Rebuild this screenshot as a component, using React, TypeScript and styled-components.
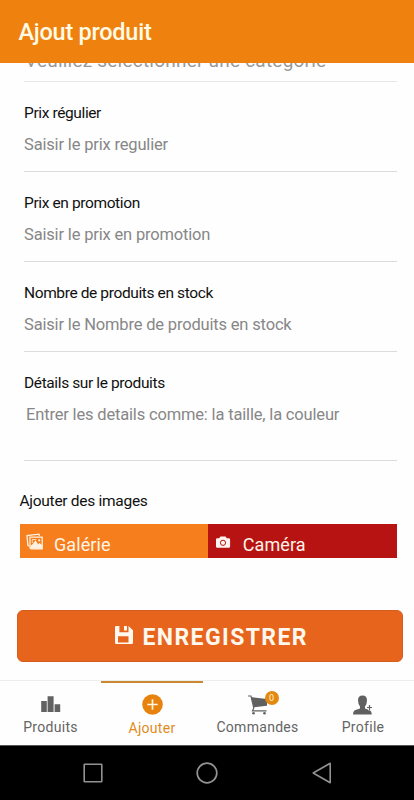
import React from 'react';
import styled, { createGlobalStyle } from 'styled-components';

const GlobalStyle = createGlobalStyle`
  *, *::before, *::after { box-sizing: border-box; }
  body { margin: 0; background: #fff; font-family: Roboto, "Liberation Sans", sans-serif; }
`;

const Screen = styled.div`
  display: flex;
  flex-direction: column;
  width: 414px;
  height: 800px;
  overflow: hidden;
  background: #fefefe;
`;

const Header = styled.header`
  flex: none;
  display: flex;
  align-items: center;
  height: 63px;
  padding-left: 18.5px;
  background: #ef820f;
`;

const Title = styled.h1`
  margin: 0;
  font-size: 23.5px;
  line-height: 26px;
  font-weight: 500;
  letter-spacing: -0.25px;
  color: #fffbe6;
`;

const Content = styled.main`
  flex: 1;
  min-height: 0;
  display: flex;
  flex-direction: column;
  justify-content: flex-end;
  overflow: hidden;
`;

const Form = styled.div`
  flex: none;
  padding: 0 17px 0 24px;
`;

const CategoryField = styled.div`
  height: 40px;
  border-bottom: 1px solid #e6e6e6;
  font-size: 19px;
  line-height: 37px;
  letter-spacing: 0.22px;
  white-space: nowrap;
  color: #999;
  padding-left: 1px;
`;

const Field = styled.label<{ $tall?: boolean }>`
  display: block;
  height: ${p => (p.$tall ? 109 : 90)}px;
  padding-top: 21px;
  border-bottom: 1px solid #dadcdc;
`;

const FieldLabel = styled.span<{ $spacing?: number }>`
  display: block;
  font-size: 15.5px;
  line-height: 20px;
  letter-spacing: ${p => p.$spacing ?? -0.38}px;
  color: #101010;
`;

const Placeholder = styled.span<{ $indent?: boolean }>`
  display: block;
  margin-top: 11px;
  padding-left: ${p => (p.$indent ? 2 : 0)}px;
  font-size: 16.5px;
  line-height: 22px;
  letter-spacing: -0.17px;
  white-space: nowrap;
  color: #878787;
`;

const Images = styled.section`
  flex: none;
  padding: 30px 17px 0 19.5px;
`;

const SourceRow = styled.div`
  display: grid;
  grid-template-columns: 1fr 1fr;
  height: 34px;
  margin-top: 13px;
`;

const SourceButton = styled.button<{ $color: string }>`
  display: flex;
  align-items: center;
  border: 0;
  padding: 7px 0 0 6px;
  gap: 10.5px;
  background: ${p => p.$color};
  color: #fff5e8;
  font: 400 18px/24px Roboto, sans-serif;
  letter-spacing: 0.1px;

  svg { flex: none; margin-top: -5px; }
`;

const SaveButton = styled.button`
  flex: none;
  display: flex;
  align-items: center;
  justify-content: center;
  gap: 10px;
  height: 52px;
  margin: 52px 11.5px 18px 17px;
  padding: 0 0 0 3px;
  border: 1px solid #d65d20;
  border-radius: 6px;
  background: #e6641c;
  color: #fff8ee;
  font: 700 23px/28px Roboto, sans-serif;
  letter-spacing: 1.4px;

  svg { margin-top: -3px; }
  span { padding-top: 4px; }
`;

const TabBar = styled.nav`
  flex: none;
  display: grid;
  grid-template-columns: 101px 102px 109px 102px;
  height: 65px;
  border-top: 1px solid #eee;
`;

const Tab = styled.div<{ $active?: boolean }>`
  display: flex;
  flex-direction: column;
  align-items: center;
  padding-top: ${p => (p.$active ? 11 : 12)}px;
  border-top: 2px solid ${p => (p.$active ? '#cb8732' : 'transparent')};
  color: ${p => (p.$active ? '#e08a1c' : '#646464')};
  font-size: 14px;
  line-height: 18px;
  letter-spacing: 0.3px;
`;

const TabIcon = styled.div<{ $active?: boolean }>`
  position: relative;
  display: flex;
  height: ${p => (p.$active ? 25 : 23)}px;
`;

const Badge = styled.span`
  position: absolute;
  left: 17px;
  top: -4px;
  width: 14px;
  height: 14px;
  border-radius: 50%;
  background: #e3890f;
  color: #fff1cf;
  font-size: 9px;
  line-height: 15px;
  letter-spacing: 0;
  text-align: center;
`;

const SystemBar = styled.footer`
  flex: none;
  display: flex;
  align-items: center;
  justify-content: center;
  gap: 93px;
  height: 55px;
  padding-left: 1px;
  background: #000;
  border-top: 1px solid #555;
`;

const GalleryIcon = () => (
  <svg width="18" height="18" viewBox="0 0 18 18" fill="none" stroke="#fff1df" strokeWidth="1.3">
    <path d="M3.2 12.8 1.9 12.4 1 2.6 13 1.2l.5 2" />
    <path d="M4 4.2h12.2v11.6H5.2L4 15z" fill="#f67e1d" />
    <path d="M4.5 15.8v-3l2-1.6 3-4 2.5 4 1.5-1.2 2.8 2.3v3.5z" fill="#fff1df" stroke="none" />
    <circle cx="13.2" cy="7.3" r="1.1" fill="#fff1df" stroke="none" />
    <path d="M6.3 10V6.5h4" strokeWidth="0.8" />
  </svg>
);

const CameraIcon = () => (
  <svg width="18" height="18" viewBox="0 0 18 18">
    <path d="M3.2 5.2h2l1.2-1.6h5.2l1.2 1.6h2q1.3 0 1.3 1.3v7q0 1.2-1.3 1.2H3.2Q2 14.7 2 13.5v-7q0-1.3 1.2-1.3z" fill="#fff5f0" />
    <circle cx="9" cy="9.8" r="2.6" fill="none" stroke="#b71313" strokeWidth="1" />
  </svg>
);

const SaveIcon = () => (
  <svg width="18" height="18" viewBox="0 0 18 18" fill="#fff8ee">
    <path fillRule="evenodd" d="M1.2 0H4.4v6.2h9.100V0L18 4.200V16.800q0 1.200-1.200 1.200H1.200Q0 18 0 16.800V1.200Q0 0 1.200 0zM3 10.300v6.200h10.500v-6.200z" />
    <path d="M9 0h3v4.500h-3z" />
  </svg>
);

const ChartIcon = () => (
  <svg width="20" height="18" viewBox="0 0 20 18" fill="#626262">
    <path d="M.2 6h5.600v11H.2zM6.600 1.300h6V17h-6zM13.600 9.200h5.600V17h-5.600z" />
  </svg>
);

const PlusIcon = () => (
  <svg width="21" height="21" viewBox="0 0 21 21">
    <circle cx="10.500" cy="10.500" r="10.300" fill="#e7820e" />
    <path d="M10.500 5.300v10.400M5.300 10.500h10.400" stroke="#fff6df" strokeWidth="1.700" />
  </svg>
);

const CartIcon = () => (
  <svg width="20" height="20" viewBox="0 0 20 20" fill="#606060">
    <path d="M3 2 19 4v6.700L5.800 12.200z" />
    <path d="M0 1h3l2.800 12-1.300 2.800h14" fill="none" stroke="#606060" strokeWidth="1.200" />
    <circle cx="5.500" cy="18.300" r="1.300" />
    <circle cx="16.500" cy="18.300" r="1.300" />
  </svg>
);

const ProfileIcon = () => (
  <svg width="20" height="20" viewBox="0 0 20 20" fill="#606060">
    <path d="M5 5.300Q5 .5 9.500.5T14 5.300q0 3.700-2 6.200v2l4.300 1.500q2.200.8 2.500 4.500H0q.2-3.700 2.500-4.500L7 13.500v-2Q5 9 5 5.300z" />
    <path d="M16.500 9.800v5.400M13.800 12.500h5.400" stroke="#fefefe" strokeWidth="3" />
    <path d="M16.500 10v5M14 12.500h5" stroke="#606060" strokeWidth="1.200" />
  </svg>
);

const RecentsIcon = () => (
  <svg width="20" height="20" viewBox="0 0 20 20" fill="none" stroke="#929292" strokeWidth="1.600">
    <rect x="1.200" y="1.200" width="17.600" height="17.600" rx=".5" />
  </svg>
);

const HomeIcon = () => (
  <svg width="22" height="22" viewBox="0 0 22 22" fill="none" stroke="#929292" strokeWidth="1.700">
    <circle cx="11" cy="11" r="9.800" />
  </svg>
);

const BackIcon = () => (
  <svg width="22" height="22" viewBox="0 0 22 22" fill="none" stroke="#929292" strokeWidth="1.600" strokeLinejoin="round">
    <path d="M19.200 1.300v19.400L2.200 11z" />
  </svg>
);

const fields = [
  { label: 'Prix régulier', hint: 'Saisir le prix regulier' },
  { label: 'Prix en promotion', hint: 'Saisir le prix en promotion' },
  { label: 'Nombre de produits en stock', hint: 'Saisir le Nombre de produits en stock' },
  { label: 'Détails sur le produits', hint: 'Entrer les details comme: la taille, la couleur', tall: true },
];

export default function App() {
  return (
    <>
      <GlobalStyle />
      <Screen>
        <Header><Title>Ajout produit</Title></Header>
        <Content>
          <Form>
            <CategoryField>Veuillez sélectionner une catégorie</CategoryField>
            {fields.map(f => (
              <Field key={f.label} $tall={f.tall}>
                <FieldLabel>{f.label}</FieldLabel>
                <Placeholder $indent={f.tall}>{f.hint}</Placeholder>
              </Field>
            ))}
          </Form>
          <Images>
            <FieldLabel $spacing={-0.28}>Ajouter des images</FieldLabel>
            <SourceRow>
              <SourceButton $color="#f67e1d"><GalleryIcon />Galérie</SourceButton>
              <SourceButton $color="#b71313"><CameraIcon />Caméra</SourceButton>
            </SourceRow>
          </Images>
          <SaveButton><SaveIcon /><span>ENREGISTRER</span></SaveButton>
        </Content>
        <TabBar>
          <Tab><TabIcon><ChartIcon /></TabIcon>Produits</Tab>
          <Tab $active><TabIcon $active><PlusIcon /></TabIcon>Ajouter</Tab>
          <Tab><TabIcon><CartIcon /><Badge>0</Badge></TabIcon>Commandes</Tab>
          <Tab><TabIcon><ProfileIcon /></TabIcon>Profile</Tab>
        </TabBar>
        <SystemBar><RecentsIcon /><HomeIcon /><BackIcon /></SystemBar>
      </Screen>
    </>
  );
}
